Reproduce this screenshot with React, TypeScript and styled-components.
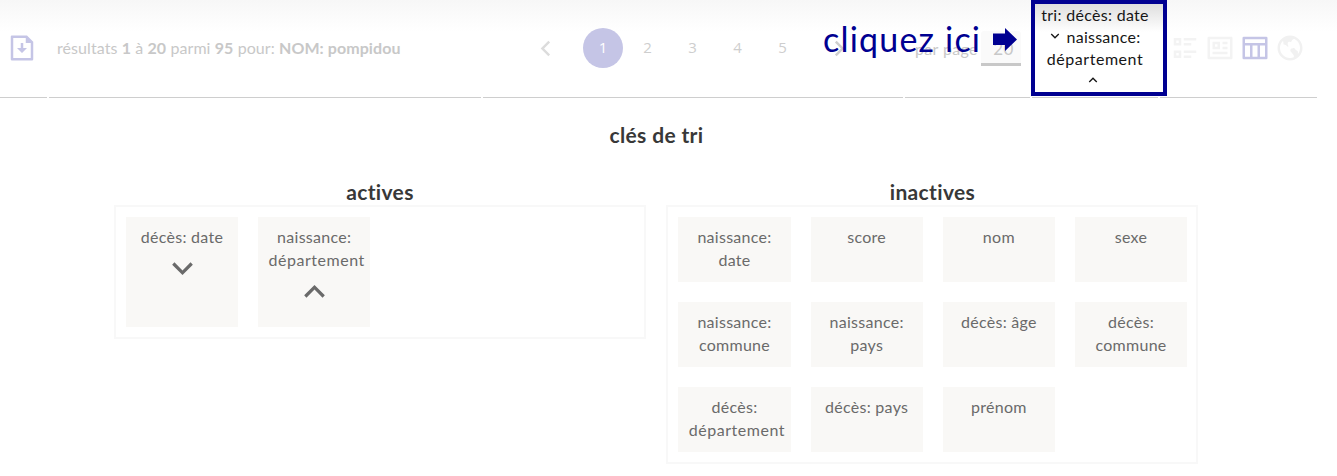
import React from "react";
import styled, { createGlobalStyle } from "styled-components";
import { RiEarthLine } from "react-icons/ri";

const GlobalStyle = createGlobalStyle`
  * { box-sizing: border-box; }
  body {
    margin: 0;
    background: #fff;
    font-family: Lato, "Liberation Sans", sans-serif;
    font-size: 16px;
    line-height: 23px;
    overflow: hidden;
  }
`;

const Page = styled.div`
  width: 1337px;
  height: 476px;
  position: relative;
  background: linear-gradient(#f7f7f7, #fff 32px);
`;

const Toolbar = styled.header`
  display: flex;
  gap: 2px;
  height: 98px;
`;

const Cell = styled.div<{ $width: number; $left?: number }>`
  display: flex;
  align-items: center;
  width: ${(p) => p.$width}px;
  height: 98px;
  padding-left: ${(p) => p.$left ?? 0}px;
  border-bottom: 1px solid #cecece;
  color: #c8c8c8;
  white-space: nowrap;
`;

const Summary = styled.span`
  margin-top: -2px;
  letter-spacing: 0.08px;
  b { font-weight: 700; letter-spacing: 0.08px; }
`;

const Icon = styled.svg<{ $size: number; $color?: string }>`
  display: block;
  flex: none;
  width: ${(p) => p.$size}px;
  height: ${(p) => p.$size}px;
  fill: ${(p) => p.$color ?? "currentColor"};
`;

const DownloadButton = styled.span`
  margin-top: -2px;
`;

const Pages = styled.nav`
  display: flex;
  align-items: center;
  margin-top: -1px;
`;

const PageNumber = styled.span<{ $current?: boolean }>`
  width: ${(p) => (p.$current ? 40 : 45)}px;
  height: 40px;
  margin: ${(p) => (p.$current ? "0 2px 0 23px" : "0")};
  border-radius: 50%;
  font-family: "Open Sans", sans-serif;
  font-size: 15px;
  line-height: 39px;
  text-align: center;
  background: ${(p) => (p.$current ? "#c5c5e6" : "transparent")};
  color: ${(p) => (p.$current ? "#fff" : "#cecece")};
`;

const NextArrow = styled.span`
  margin-left: 20px;
`;

const PerPage = styled.span`
  letter-spacing: 0.35px;
  width: 66px;
`;

const CountField = styled.span`
  width: 40px;
  height: 35px;
  border-bottom: 3px solid #c8c8c8;
  border-radius: 3px 3px 0 0;
  background: #fafafa;
  font-size: 17px;
  line-height: 36px;
  padding-left: 5px;
  text-align: center;
  letter-spacing: 0.3px;
`;

const ViewIcons = styled.div`
  display: flex;
  gap: 5px;
  margin-top: -1px;
`;

const SortButton = styled.div`
  position: absolute;
  left: 1031px;
  top: 0;
  width: 136px;
  height: 96px;
  padding-right: 8px;
  border: 4px solid #000091;
  background: linear-gradient(#dedede, #fff 28px);
  color: #161616;
  display: flex;
  flex-direction: column;
  align-items: center;
  white-space: nowrap;
`;

const SortLine = styled.div<{ $spacing: number }>`
  display: flex;
  justify-content: center;
  height: 22.5px;
  line-height: 22px;
  letter-spacing: ${(p) => p.$spacing}px;
`;

const SmallArrow = styled.span<{ $last?: boolean }>`
  margin: ${(p) => (p.$last ? "2px 4px 0 0" : "2px 4px 0 0")};
`;

const SortName = styled.span`
  margin-right: 3px;
`;

const Hint = styled.div`
  position: absolute;
  left: 823px;
  top: 19px;
  display: flex;
  align-items: center;
  gap: 10px;
  height: 40px;
  color: #000091;
  font-size: 34px;
  line-height: 40px;
  letter-spacing: 1.2px;
  white-space: nowrap;
`;

const HintText = styled.span`
  width: 160px;
`;

const HintArrow = styled.svg`
  width: 24px;
  height: 23px;
  fill: #000091;
`;

const Panel = styled.main`
  width: 1313px;
  padding-top: 25px;
  text-align: center;
  color: #383838;
`;

const Title = styled.h2`
  margin: 0;
  font-size: 21px;
  line-height: 24px;
  font-weight: 700;
  letter-spacing: 0.35px;
`;

const Columns = styled.div`
  display: flex;
  gap: 20.6px;
  padding: 33px 0 0 114px;
`;

const Column = styled.section`
  width: 531.9px;
`;

const Keys = styled.div<{ $height: number }>`
  display: flex;
  flex-wrap: wrap;
  align-content: flex-start;
  gap: 20px;
  height: ${(p) => p.$height}px;
  margin-top: 1px;
  padding: 10px 0 0 9.9px;
  border: 2px solid #f8f8f8;
`;

const Key = styled.div<{ $tall?: boolean }>`
  display: flex;
  flex-direction: column;
  align-items: center;
  width: 112.2px;
  height: ${(p) => (p.$tall ? 110 : 65)}px;
  padding-top: 8px;
  background: #f9f8f6;
  color: #6a6a6a;
  letter-spacing: 0.27px;
`;

const LongLabel = styled.span`
  padding-left: 5px;
  letter-spacing: 0.53px;
`;

const Direction = styled.span`
  margin: 1px 0 0 1px;
`;

const paths = {
  download:
    "M13 12h3l-4 4-4-4h3V8h2v4zm2-8H5v16h14V8h-4V4zM3 2.992C3 2.444 3.447 2 3.999 2H16l5 5v13.993A1 1 0 0 1 20.007 22H3.993A1 1 0 0 1 3 21.008V2.992z",
  left: "M10.828 12l4.95 4.95-1.414 1.414L8 12l6.364-6.364 1.414 1.414z",
  right: "M13.172 12l-4.95-4.95 1.414-1.414L16 12l-6.364 6.364-1.414-1.414z",
  up: "M12 10.828l-4.95 4.95-1.414-1.414L12 8l6.364 6.364-1.414 1.414z",
  down: "M12 13.172l4.95-4.95 1.414 1.414L12 16 5.636 9.636 7.05 8.222z",
  list: "M11 4h10v2H11V4zm0 4h6v2h-6V8zm0 6h10v2H11v-2zm0 4h6v2h-6v-2zM3 4h6v6H3V4zm2 2v2h2V6H5zm-2 8h6v6H3v-6zm2 2v2h2v-2H5z",
  profile:
    "M2 3.993A1 1 0 0 1 2.992 3h18.016c.548 0 .992.445.992.993v16.014a1 1 0 0 1-.992.993H2.992A.993.993 0 0 1 2 20.007V3.993zM4 5v14h16V5H4zm2 2h6v6H6V7zm2 2v2h2V9H8zm-2 6h12v2H6v-2zm8-8h4v2h-4V7zm0 4h4v2h-4v-2z",
  table:
    "M4 8h16V5H4v3zm10 11v-9h-4v9h4zm2 0h4v-9h-4v9zm-8 0v-9H4v9h4zM3 3h18a1 1 0 0 1 1 1v16a1 1 0 0 1-1 1H3a1 1 0 0 1-1-1V4a1 1 0 0 1 1-1z",
};

function Glyph({ name, size, color }: { name: keyof typeof paths; size: number; color?: string }) {
  return (
    <Icon viewBox="0 0 24 24" $size={size} $color={color}>
      <path d={paths[name]} />
    </Icon>
  );
}

const inactiveKeys: string[][] = [
  ["naissance:", "date"],
  ["score"],
  ["nom"],
  ["sexe"],
  ["naissance:", "commune"],
  ["naissance:", "pays"],
  ["décès: âge"],
  ["décès:", "commune"],
  ["décès:", "département"],
  ["décès: pays"],
  ["prénom"],
];

function KeyLabel({ lines }: { lines: string[] }) {
  return (
    <>
      {lines.map((line) =>
        line === "département" ? (
          <LongLabel key={line}>{line}</LongLabel>
        ) : (
          <span key={line}>{line}</span>
        )
      )}
    </>
  );
}

export default function App() {
  return (
    <>
      <GlobalStyle />
      <Page>
        <Toolbar>
          <Cell $width={47} $left={7}>
            <DownloadButton>
              <Glyph name="download" size={30} color="#c5c5e6" />
            </DownloadButton>
          </Cell>
          <Cell $width={432} $left={8}>
            <Summary>
              résultats <b>1</b> à <b>20</b> parmi <b>95</b> pour: <b>NOM: pompidou</b>
            </Summary>
          </Cell>
          <Cell $width={420} $left={48}>
            <Pages>
              <Glyph name="left" size={29} color="#dcdcdc" />
              <PageNumber $current>1</PageNumber>
              <PageNumber>2</PageNumber>
              <PageNumber>3</PageNumber>
              <PageNumber>4</PageNumber>
              <PageNumber>5</PageNumber>
              <NextArrow>
                <Glyph name="right" size={29} color="#cecece" />
              </NextArrow>
            </Pages>
          </Cell>
          <Cell $width={125} $left={10}>
            <PerPage>par page</PerPage>
            <CountField>20</CountField>
          </Cell>
          <Cell $width={126} />
          <Cell $width={157} $left={10}>
            <ViewIcons>
              <Glyph name="list" size={30} color="#f3f3f3" />
              <Glyph name="profile" size={30} color="#f3f3f3" />
              <Glyph name="table" size={30} color="#c5c5e6" />
              <RiEarthLine size={30} color="#f1f1f1" />
            </ViewIcons>
          </Cell>
        </Toolbar>

        <Panel>
          <Title>clés de tri</Title>
          <Columns>
            <Column>
              <Title>actives</Title>
              <Keys $height={134}>
                <Key $tall>
                  <KeyLabel lines={["décès: date"]} />
                  <Direction>
                    <Glyph name="down" size={39} />
                  </Direction>
                </Key>
                <Key $tall>
                  <KeyLabel lines={["naissance:", "département"]} />
                  <Direction>
                    <Glyph name="up" size={39} />
                  </Direction>
                </Key>
              </Keys>
            </Column>
            <Column>
              <Title>inactives</Title>
              <Keys $height={259}>
                {inactiveKeys.map((lines) => (
                  <Key key={lines.join(" ")}>
                    <KeyLabel lines={lines} />
                  </Key>
                ))}
              </Keys>
            </Column>
          </Columns>
        </Panel>

        <Hint>
          <HintText>cliquez ici</HintText>
          <HintArrow viewBox="0 0 24 23">
            <path d="M0 5.5h12V0l12 11.5L12 23v-6H0z" />
          </HintArrow>
        </Hint>

        <SortButton>
          <SortLine $spacing={0.3}>tri: décès: date</SortLine>
          <SortLine $spacing={0.25}>
            <SmallArrow>
              <Glyph name="down" size={16} />
            </SmallArrow>
            <SortName>naissance:</SortName>
          </SortLine>
          <SortLine $spacing={0.55}>département</SortLine>
          <SortLine $spacing={0}>
            <SmallArrow $last>
              <Glyph name="up" size={16} />
            </SmallArrow>
          </SortLine>
        </SortButton>
      </Page>
    </>
  );
}
